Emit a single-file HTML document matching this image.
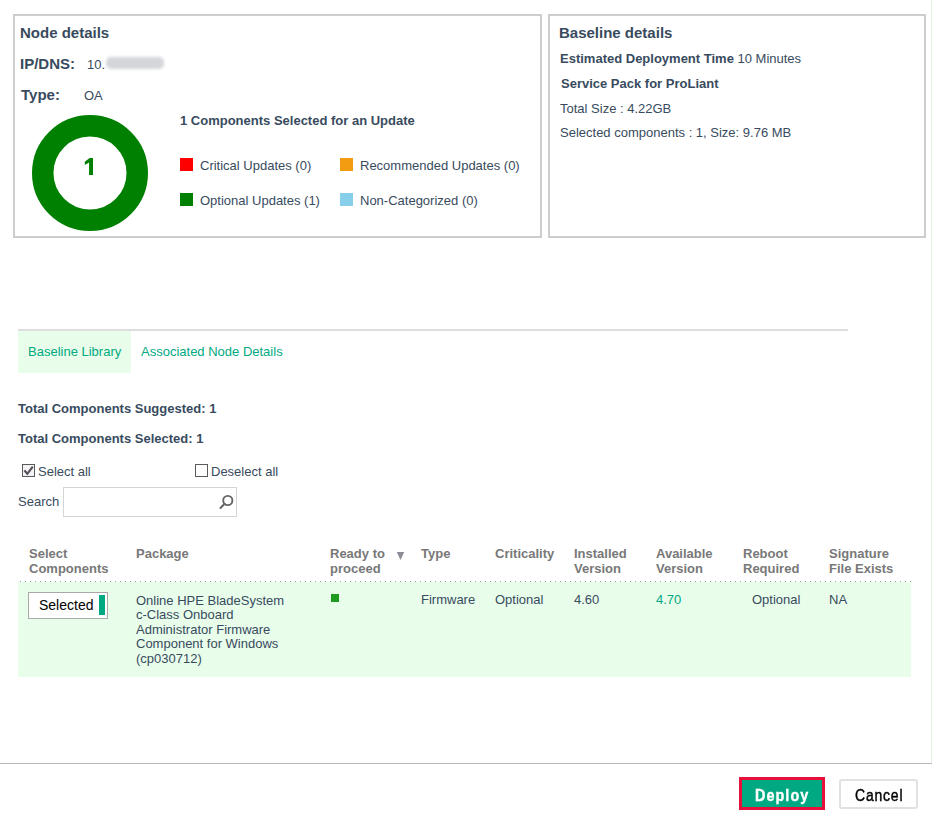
<!DOCTYPE html>
<html>
<head>
<meta charset="utf-8">
<style>
html,body{margin:0;padding:0;background:#fff;}
body{width:932px;height:820px;position:relative;overflow:hidden;font-family:"Liberation Sans",sans-serif;color:#384b5e;}
.a{position:absolute;white-space:nowrap;}
.t{position:absolute;white-space:nowrap;font-size:13px;line-height:13px;}
.b{font-weight:bold;}
.h{position:absolute;white-space:nowrap;font-size:13px;line-height:15px;margin-top:-0.5px;font-weight:bold;color:#787878;}
.teal{color:#01a982;}
.box{position:absolute;border:2px solid #cdcdcd;box-sizing:border-box;background:#fff;}
.sq{position:absolute;width:13px;height:13px;}
</style>
</head>
<body>

<!-- Node details box -->
<div class="box" style="left:13px;top:14px;width:529px;height:224px;"></div>
<div class="t b" style="left:20px;top:25px;font-size:15px;line-height:15px;">Node details</div>
<div class="t b" style="left:20px;top:56px;font-size:15px;line-height:15px;">IP/DNS:</div>
<div class="t" style="left:87px;top:58px;">10.</div>
<div class="a" style="left:106px;top:57px;width:58px;height:12px;background:#d4d6da;border-radius:5px;filter:blur(1.6px);"></div>
<div class="t b" style="left:21px;top:87px;font-size:15px;line-height:15px;">Type:</div>
<div class="t" style="left:84px;top:89px;">OA</div>

<!-- donut -->
<svg class="a" style="left:30px;top:113px;" width="120" height="120" viewBox="0 0 120 120">
  <circle cx="60" cy="60" r="47.25" fill="none" stroke="#008000" stroke-width="21.5"/>
</svg>
<svg class="a" style="left:80px;top:150px;" width="20" height="30" viewBox="80 150 20 30"><path d="M89.6 158 L93 158 L93 175 L89.1 175 L89.1 162.4 L84.8 164.9 L84.8 161.7 Z" fill="#008000"/></svg>

<div class="t b" style="left:180px;top:114px;">1 Components Selected for an Update</div>
<div class="sq" style="left:180px;top:158px;background:#fe0000;"></div>
<div class="t" style="left:200px;top:159px;">Critical Updates (0)</div>
<div class="sq" style="left:340px;top:158px;background:#f39c12;"></div>
<div class="t" style="left:360px;top:159px;">Recommended Updates (0)</div>
<div class="sq" style="left:180px;top:193px;background:#008000;"></div>
<div class="t" style="left:200px;top:194px;">Optional Updates (1)</div>
<div class="sq" style="left:340px;top:193px;background:#87ceeb;"></div>
<div class="t" style="left:360px;top:194px;">Non-Categorized (0)</div>

<!-- Baseline details box -->
<div class="box" style="left:548px;top:14px;width:378px;height:224px;"></div>
<div class="t b" style="left:559px;top:25px;font-size:15px;line-height:15px;">Baseline details</div>
<div class="t" style="left:560px;top:52px;"><b>Estimated Deployment Time</b> 10 Minutes</div>
<div class="t b" style="left:561px;top:77px;">Service Pack for ProLiant</div>
<div class="t" style="left:560px;top:102px;">Total Size : 4.22GB</div>
<div class="t" style="left:560px;top:126px;">Selected components : 1, Size: 9.76 MB</div>

<!-- tabs -->
<div class="a" style="left:18px;top:329px;width:830px;height:2px;background:#e0dde0;"></div>
<div class="a" style="left:18px;top:331px;width:113px;height:42px;background:#e8fdea;"></div>
<div class="t teal" style="left:28px;top:345px;">Baseline Library</div>
<div class="t teal" style="left:141px;top:345px;">Associated Node Details</div>

<div class="t b" style="left:18px;top:402px;">Total Components Suggested: 1</div>
<div class="t b" style="left:18px;top:432px;">Total Components Selected: 1</div>

<!-- checkboxes -->
<div class="a" style="left:22px;top:464px;width:13px;height:13px;box-sizing:border-box;border:1px solid #5a5a5a;background:#f4f4f4;"></div>
<svg class="a" style="left:22px;top:464px;" width="13" height="13" viewBox="0 0 13 13"><path d="M2.4 6.4 L5.3 9.8 L10.8 2.6" fill="none" stroke="#58505a" stroke-width="2.2"/></svg>
<div class="t" style="left:38px;top:465px;">Select all</div>
<div class="a" style="left:195px;top:464px;width:13px;height:13px;box-sizing:border-box;border:1px solid #5a5a5a;background:#fff;"></div>
<div class="t" style="left:211px;top:465px;">Deselect all</div>

<div class="t" style="left:18px;top:495px;">Search</div>
<div class="a" style="left:63px;top:487px;width:174px;height:30px;box-sizing:border-box;border:1px solid #d4d4d4;"></div>
<svg class="a" style="left:216px;top:490px;" width="20" height="22" viewBox="0 0 20 22">
  <circle cx="11.8" cy="10.5" r="4.6" fill="none" stroke="#666" stroke-width="1.9"/>
  <path d="M8.6 13.8 L4.5 18" stroke="#666" stroke-width="2" stroke-linecap="round"/>
</svg>

<!-- table header -->
<div class="h" style="left:29px;top:546px;">Select<br>Components</div>
<div class="h" style="left:136px;top:546px;">Package</div>
<div class="h" style="left:330px;top:546px;">Ready to<br>proceed</div>
<svg class="a" style="left:390px;top:548px;" width="20" height="16" viewBox="390 548 20 16"><path d="M396.8 552 L404.2 552 L400.5 560 Z" fill="#8c8c96"/></svg>
<div class="h" style="left:421px;top:546px;">Type</div>
<div class="h" style="left:495px;top:546px;">Criticality</div>
<div class="h" style="left:574px;top:546px;">Installed<br>Version</div>
<div class="h" style="left:656px;top:546px;">Available<br>Version</div>
<div class="h" style="left:743px;top:546px;">Reboot<br>Required</div>
<div class="h" style="left:829px;top:546px;">Signature<br>File Exists</div>

<!-- row -->
<div class="a" style="left:18px;top:582px;width:893px;height:95px;background:#e9fdeb;"></div>
<div class="a" style="left:18px;top:581px;width:893px;height:1px;background:repeating-linear-gradient(90deg,transparent 0,transparent 2px,#9a9a9a 2px,#9a9a9a 3px,transparent 3px,transparent 5px);"></div>
<div class="a" style="left:28px;top:592px;width:80px;height:27px;box-sizing:border-box;border:1px solid #a9a9a9;background:#fff;"></div>
<div class="a" style="left:99px;top:595px;width:6px;height:20px;background:#01a982;"></div>
<div class="a" style="left:39px;top:598px;font-size:14px;line-height:14px;color:#000;">Selected</div>
<div class="a" style="left:136px;top:593.5px;font-size:13px;line-height:14.6px;">Online HPE BladeSystem<br>c-Class Onboard<br>Administrator Firmware<br>Component for Windows<br>(cp030712)</div>
<div class="a" style="left:331px;top:594px;width:8px;height:8px;background:#1e9a1e;"></div>
<div class="t" style="left:421px;top:593px;">Firmware</div>
<div class="t" style="left:495px;top:593px;">Optional</div>
<div class="t" style="left:574px;top:593px;">4.60</div>
<div class="t teal" style="left:656px;top:593px;">4.70</div>
<div class="t" style="left:752px;top:593px;">Optional</div>
<div class="t" style="left:829px;top:593px;">NA</div>

<!-- right edge & footer -->
<div class="a" style="left:931px;top:0;width:1px;height:763px;background:#e4f2e4;"></div>
<div class="a" style="left:0;top:763px;width:932px;height:1px;background:#b4bcb4;"></div>

<div class="a" style="left:739px;top:777px;width:86px;height:33px;box-sizing:border-box;border:3px solid #e8103a;background:#01a982;"></div>
<div class="a b" style="left:755px;top:786.5px;font-size:17px;line-height:17px;color:#fff;-webkit-text-stroke:0.4px #fff;letter-spacing:1.2px;transform:scaleX(0.85);transform-origin:0 0;">Deploy</div>
<div class="a" style="left:839px;top:779px;width:79px;height:30px;box-sizing:border-box;border:2px solid #e2e0e2;border-radius:3px;background:#fff;"></div>
<div class="a" style="left:855px;top:786.5px;font-size:17px;line-height:17px;color:#000;-webkit-text-stroke:0.45px #000;letter-spacing:1px;transform:scaleX(0.82);transform-origin:0 0;">Cancel</div>

</body>
</html>
